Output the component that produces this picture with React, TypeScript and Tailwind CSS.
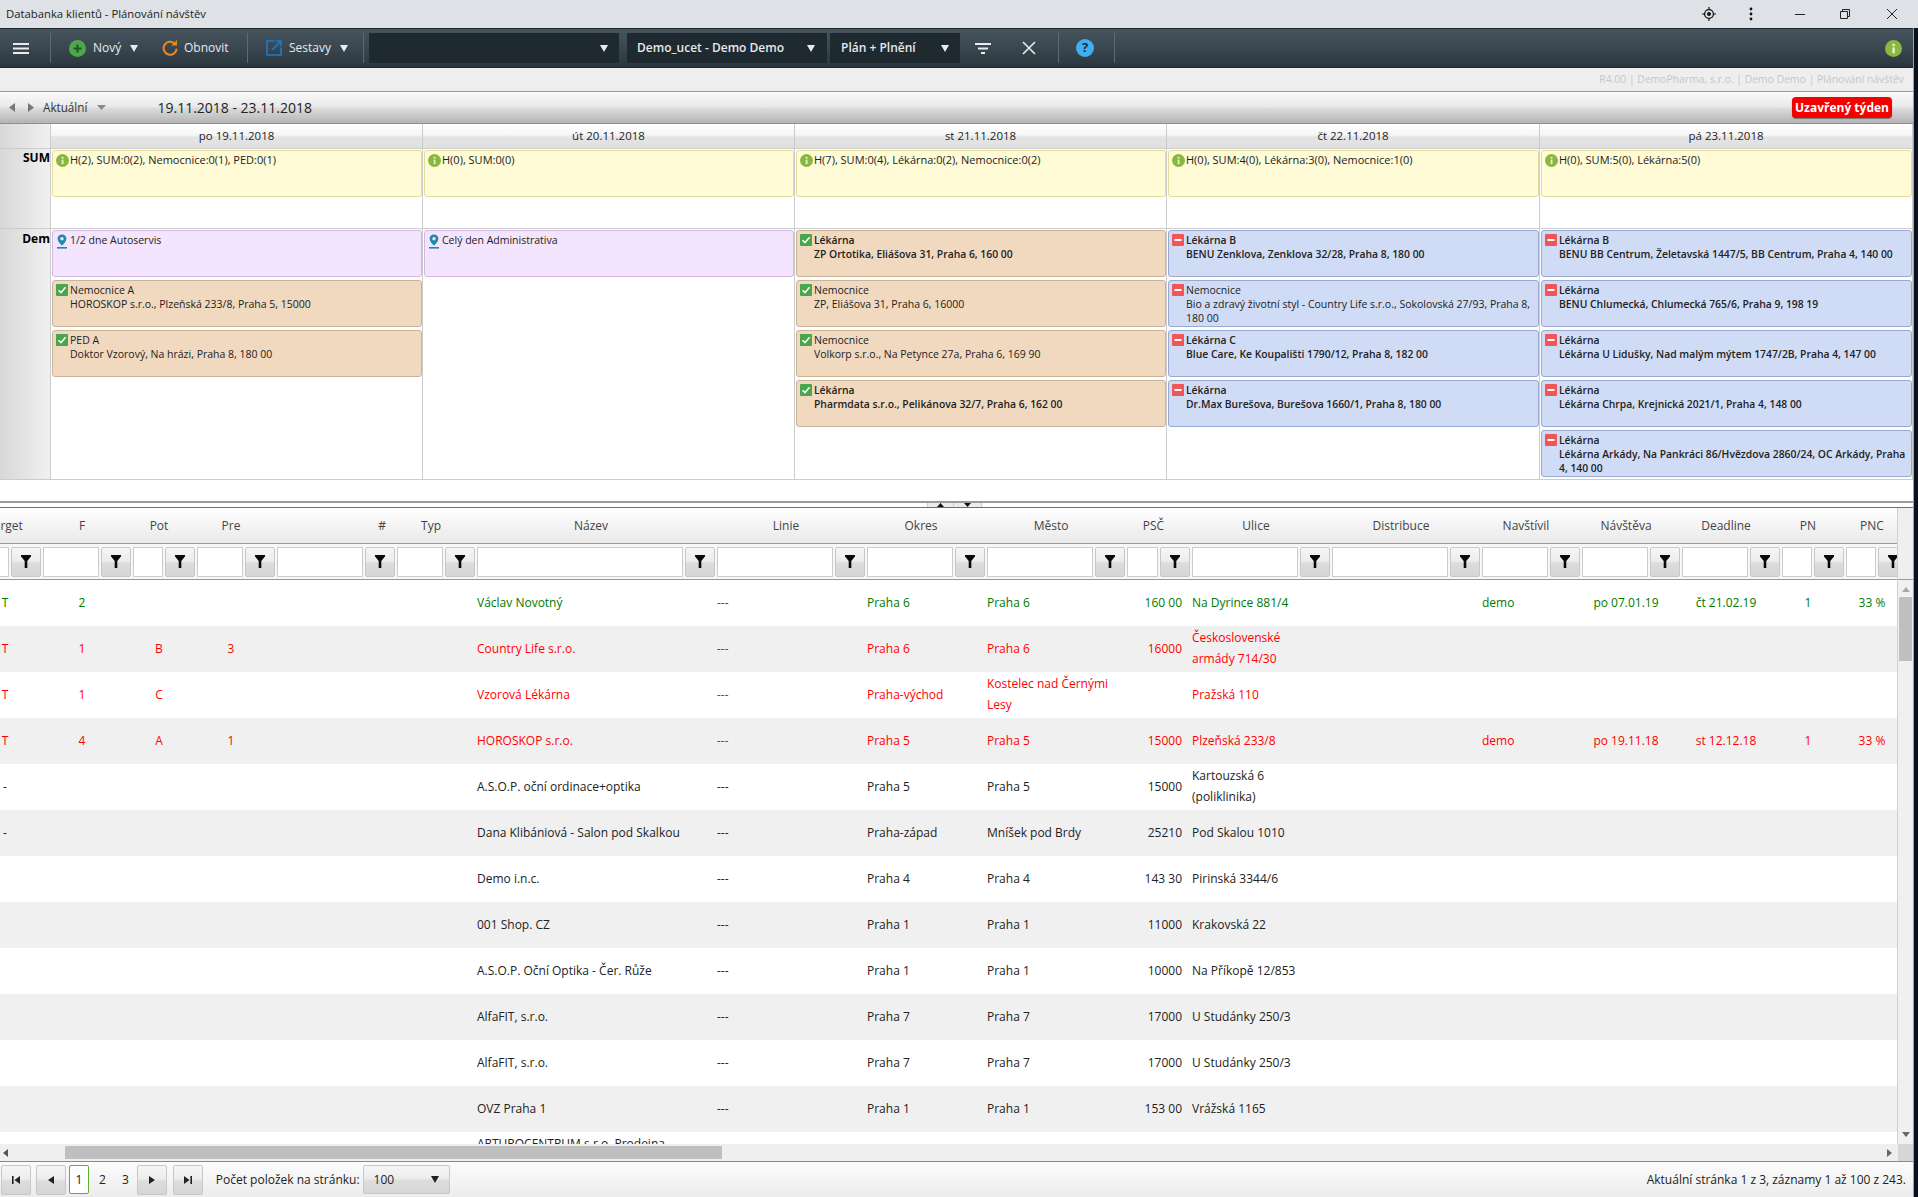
import React from "react";

const Tri = ({ c = "#e8ecef", w = 8, h = 7 }: { c?: string; w?: number; h?: number }) => (
  <svg width={w} height={h} viewBox="0 0 8 7" preserveAspectRatio="none" className="shrink-0"><path d="M0 0H8L4 7Z" fill={c} /></svg>
);
const Funnel = () => (
  <svg width="10" height="13" viewBox="0 0 10 13"><path d="M0 0H10V1.5L6.3 6V13H3.7V6L0 1.5Z" fill="#0a0a0a" /></svg>
);
const InfoDot = ({ s = 12 }: { s?: number }) => (
  <svg width={s} height={s} viewBox="0 0 16 16" className="shrink-0">
    <circle cx="8" cy="8" r="8" fill="#8ab73f" />
    <rect x="7" y="7" width="2.2" height="5.5" fill="#e8f2d0" />
    <rect x="7" y="3.6" width="2.2" height="2.2" fill="#e8f2d0" />
  </svg>
);
const Check = () => (
  <svg width="12" height="12" viewBox="0 0 12 12" className="shrink-0">
    <rect width="12" height="12" rx="1" fill="#4aa64c" />
    <path d="M2.5 6.2 5 8.6 9.6 3.2" fill="none" stroke="#fff" strokeWidth="1.5" />
  </svg>
);
const Minus = () => (
  <svg width="12" height="12" viewBox="0 0 12 12" className="shrink-0">
    <rect width="12" height="12" rx="1" fill="#f25555" />
    <rect x="2.5" y="5" width="7" height="2" fill="#fff" />
  </svg>
);
const Pin = () => (
  <svg width="12" height="15" viewBox="0 0 12 15" className="shrink-0">
    <path d="M6 0.5C3.4 0.5 1.6 2.4 1.6 4.8 1.6 7.6 4.6 10 6 11.8 7.4 10 10.4 7.6 10.4 4.8 10.4 2.4 8.6 0.5 6 0.5Z" fill="#1f8ca6" />
    <circle cx="6" cy="4.8" r="1.7" fill="#f4e4fd" />
    <rect x="1" y="13" width="10" height="1.6" fill="#1f8ca6" />
  </svg>
);

type CardT = { k: "y" | "p" | "t" | "b"; icon: "i" | "pin" | "c" | "m"; title?: string; text?: string; bold?: boolean };
const cardStyle = {
  y: "bg-[#fffbd6] border-[#e2dd9f] text-[11px]",
  p: "bg-[#f4e4fd] border-[#d2b9e2] text-[10.5px]",
  t: "bg-[#f1d9bf] border-[#c9b49a] text-[10.5px]",
  b: "bg-[#d0dcf5] border-[#9aa9cf] text-[10.5px]",
};
const Card = ({ c }: { c: CardT }) => (
  <div className={`h-[47px] mb-[3px] ml-[1px] border rounded-[3px] flex pl-[3px] pr-[2px] pt-[2px] overflow-hidden leading-[14px] text-[#222] ${cardStyle[c.k]}`}>
    <div className="w-[14px] shrink-0 flex justify-start pt-[1px]">
      {c.icon === "i" && <InfoDot s={13} />}
      {c.icon === "pin" && <Pin />}
      {c.icon === "c" && <Check />}
      {c.icon === "m" && <Minus />}
    </div>
    <div className={`min-w-0 ${c.bold ? "font-semibold text-[10.35px]" : ""}`}>
      {c.title && <div>{c.title}</div>}
      {c.text && <div>{c.text}</div>}
    </div>
  </div>
);

const calCols = "grid grid-cols-[51px_372px_372px_372px_373px_373px]";
const days = ["po 19.11.2018", "út 20.11.2018", "st 21.11.2018", "čt 22.11.2018", "pá 23.11.2018"];
const sums = [
  "H(2), SUM:0(2), Nemocnice:0(1), PED:0(1)",
  "H(0), SUM:0(0)",
  "H(7), SUM:0(4), Lékárna:0(2), Nemocnice:0(2)",
  "H(0), SUM:4(0), Lékárna:3(0), Nemocnice:1(0)",
  "H(0), SUM:5(0), Lékárna:5(0)",
];
const dem: CardT[][] = [
  [
    { k: "p", icon: "pin", title: "1/2 dne Autoservis" },
    { k: "t", icon: "c", title: "Nemocnice A", text: "HOROSKOP s.r.o., Plzeňská 233/8, Praha 5, 15000" },
    { k: "t", icon: "c", title: "PED A", text: "Doktor Vzorový, Na hrázi, Praha 8, 180 00" },
  ],
  [{ k: "p", icon: "pin", title: "Celý den Administrativa" }],
  [
    { k: "t", icon: "c", title: "Lékárna", text: "ZP Ortotika, Eliášova 31, Praha 6, 160 00", bold: true },
    { k: "t", icon: "c", title: "Nemocnice", text: "ZP, Eliášova 31, Praha 6, 16000" },
    { k: "t", icon: "c", title: "Nemocnice", text: "Volkorp s.r.o., Na Petynce 27a, Praha 6, 169 90" },
    { k: "t", icon: "c", title: "Lékárna", text: "Pharmdata s.r.o., Pelikánova 32/7, Praha 6, 162 00", bold: true },
  ],
  [
    { k: "b", icon: "m", title: "Lékárna B", text: "BENU Zenklova, Zenklova 32/28, Praha 8, 180 00", bold: true },
    { k: "b", icon: "m", title: "Nemocnice", text: "Bio a zdravý životní styl - Country Life s.r.o., Sokolovská 27/93, Praha 8, 180 00" },
    { k: "b", icon: "m", title: "Lékárna C", text: "Blue Care, Ke Koupališti 1790/12, Praha 8, 182 00", bold: true },
    { k: "b", icon: "m", title: "Lékárna", text: "Dr.Max Burešova, Burešova 1660/1, Praha 8, 180 00", bold: true },
  ],
  [
    { k: "b", icon: "m", title: "Lékárna B", text: "BENU BB Centrum, Želetavská 1447/5, BB Centrum, Praha 4, 140 00", bold: true },
    { k: "b", icon: "m", title: "Lékárna", text: "BENU Chlumecká, Chlumecká 765/6, Praha 9, 198 19", bold: true },
    { k: "b", icon: "m", title: "Lékárna", text: "Lékárna U Lidušky, Nad malým mýtem 1747/2B, Praha 4, 147 00", bold: true },
    { k: "b", icon: "m", title: "Lékárna", text: "Lékárna Chrpa, Krejnická 2021/1, Praha 4, 148 00", bold: true },
    { k: "b", icon: "m", title: "Lékárna", text: "Lékárna Arkády, Na Pankráci 86/Hvězdova 2860/24, OC Arkády, Praha 4, 140 00", bold: true },
  ],
];

const gridCols = "grid grid-cols-[64px_90px_64px_80px_120px_80px_240px_150px_120px_140px_65px_140px_150px_100px_100px_100px_64px_64px_64px]";
const headers = ["Target", "F", "Pot", "Pre", "#", "Typ", "Název", "Linie", "Okres", "Město", "PSČ", "Ulice", "Distribuce", "Navštívil", "Návštěva", "Deadline", "PN", "PNC", ""];
const C = "text-center pr-[10px]";
const L = "pl-[1px] pr-[10px]";
const R = "text-right pr-[9px]";
const align = [C, C, C, C, R, C, L, L, L, L, R, L, L, L, C, C, C, C, C];

type Row = { color: string; v: string[] };
const red = "text-[#ff0000]";
const grn = "text-[#007a00]";
const blk = "text-[#222]";
const rows: Row[] = [
  { color: grn, v: ["T", "2", "", "", "", "", "Václav Novotný", "---", "Praha 6", "Praha 6", "160 00", "Na Dyrince 881/4", "", "demo", "po 07.01.19", "čt 21.02.19", "1", "33 %", ""] },
  { color: red, v: ["T", "1", "B", "3", "", "", "Country Life s.r.o.", "---", "Praha 6", "Praha 6", "16000", "Československé armády 714/30", "", "", "", "", "", "", ""] },
  { color: red, v: ["T", "1", "C", "", "", "", "Vzorová Lékárna", "---", "Praha-východ", "Kostelec nad Černými Lesy", "", "Pražská 110", "", "", "", "", "", "", ""] },
  { color: red, v: ["T", "4", "A", "1", "", "", "HOROSKOP s.r.o.", "---", "Praha 5", "Praha 5", "15000", "Plzeňská 233/8", "", "demo", "po 19.11.18", "st 12.12.18", "1", "33 %", ""] },
  { color: blk, v: ["-", "", "", "", "", "", "A.S.O.P. oční ordinace+optika", "---", "Praha 5", "Praha 5", "15000", "Kartouzská 6 (poliklinika)", "", "", "", "", "", "", ""] },
  { color: blk, v: ["-", "", "", "", "", "", "Dana Klibániová - Salon pod Skalkou", "---", "Praha-západ", "Mníšek pod Brdy", "25210", "Pod Skalou 1010", "", "", "", "", "", "", ""] },
  { color: blk, v: ["", "", "", "", "", "", "Demo i.n.c.", "---", "Praha 4", "Praha 4", "143 30", "Pirinská 3344/6", "", "", "", "", "", "", ""] },
  { color: blk, v: ["", "", "", "", "", "", "001 Shop. CZ", "---", "Praha 1", "Praha 1", "11000", "Krakovská 22", "", "", "", "", "", "", ""] },
  { color: blk, v: ["", "", "", "", "", "", "A.S.O.P. Oční Optika - Čer. Růže", "---", "Praha 1", "Praha 1", "10000", "Na Příkopě 12/853", "", "", "", "", "", "", ""] },
  { color: blk, v: ["", "", "", "", "", "", "AlfaFIT, s.r.o.", "---", "Praha 7", "Praha 7", "17000", "U Studánky 250/3", "", "", "", "", "", "", ""] },
  { color: blk, v: ["", "", "", "", "", "", "AlfaFIT, s.r.o.", "---", "Praha 7", "Praha 7", "17000", "U Studánky 250/3", "", "", "", "", "", "", ""] },
  { color: blk, v: ["", "", "", "", "", "", "OVZ Praha 1", "---", "Praha 1", "Praha 1", "153 00", "Vrážská 1165", "", "", "", "", "", "", ""] },
  { color: blk, v: ["", "", "", "", "", "", "ARTUROCENTRUM s.r.o. Prodejna Vinohrady", "---", "Praha 1", "Praha 1", "11000", "Národní 25", "", "", "", "", "", "", ""] },
];

const Sep = () => <div className="w-px h-[30px] bg-[#5e6a72] shrink-0" />;
const selectCls = "h-[30px] bg-[#1f2930] flex items-center justify-between shrink-0 font-semibold text-[#e6eaee]";
const btnCls = "w-[30px] h-[30px] border border-[#c8c8c8] rounded-[2px] bg-[linear-gradient(to_bottom,#f6f6f6_0%,#ededed_45%,#dcdcdc_55%,#d6d6d6_100%)] flex items-center justify-center shrink-0";

const PagerBtn = ({ d }: { d: string }) => (
  <div className={btnCls}>
    <svg width="10" height="8" viewBox="0 0 10 8"><path d={d} fill="#222" /></svg>
  </div>
);

export default function App() {
  return (
    <div className="w-[1918px] h-[1197px] flex flex-col overflow-hidden bg-white text-[12px] font-['Open_Sans',sans-serif] text-[#222]">
      {/* title bar */}
      <div className="h-[28px] shrink-0 bg-[#dee1e5] flex items-center pl-[6px] text-[#222]">
        <span className="text-[11.3px]">Databanka klientů - Plánování návštěv</span>
        <div className="flex-1" />
        <svg width="14" height="14" viewBox="0 0 14 14" className="mr-[33px]">
          <circle cx="7" cy="7" r="4.4" fill="none" stroke="#111" strokeWidth="1.3" />
          <circle cx="7" cy="7" r="2" fill="#111" />
          <path d="M7 0V2.6M7 11.4V14M0 7H2.6M11.4 7H14" stroke="#111" strokeWidth="1.2" />
        </svg>
        <svg width="4" height="14" viewBox="0 0 4 14" className="mr-[42px]">
          <circle cx="2" cy="2" r="1.4" fill="#111" />
          <circle cx="2" cy="7" r="1.4" fill="#111" />
          <circle cx="2" cy="12" r="1.4" fill="#111" />
        </svg>
        <svg width="10" height="10" viewBox="0 0 10 10" className="mr-[35px]"><path d="M0 5.5H10" stroke="#222" strokeWidth="1" /></svg>
        <svg width="10" height="10" viewBox="0 0 10 10" className="mr-[37px]">
          <path d="M.5 2.5H7.5V9.5H.5Z M2.5 2.5V.5H9.5V7.5H7.5" fill="none" stroke="#222" strokeWidth="1" />
        </svg>
        <svg width="10" height="10" viewBox="0 0 10 10" className="mr-[21px]"><path d="M0 0L10 10M10 0L0 10" stroke="#222" strokeWidth="1" /></svg>
      </div>

      <div className="flex-1 min-h-0 flex bg-[#0a101c]">
        <div className="w-[1914px] h-full flex flex-col bg-white border-r border-[#a0a0a0]">
          {/* toolbar */}
          <div className="h-[40px] shrink-0 flex items-center bg-[linear-gradient(to_bottom,#46545e_0%,#3a4750_50%,#2b363e_100%)] border-t border-b border-[#1c2329] text-[#e6eaee]">
            <div className="w-[50px] pl-[13px] shrink-0">
              <svg width="16" height="11" viewBox="0 0 16 11"><path d="M0 1H16M0 5.5H16M0 10H16" stroke="#e8ecef" strokeWidth="2" /></svg>
            </div>
            <Sep />
            <div className="w-[111px] shrink-0 flex items-center pl-[18px]">
              <svg width="17" height="17" viewBox="0 0 17 17">
                <circle cx="8.5" cy="8.5" r="8.5" fill="#4ca84a" />
                <path d="M8.5 4.5V12.5M4.5 8.5H12.5" stroke="#22522a" strokeWidth="2" />
              </svg>
              <span className="ml-[7px]">Nový</span>
              <span className="ml-[9px]"><Tri /></span>
            </div>
            <div className="w-[85px] shrink-0 flex items-center">
              <svg width="16" height="16" viewBox="0 0 16 16">
                <path d="M12.6 3.6A6.5 6.5 0 1 0 14.6 8.6" fill="none" stroke="#f0861e" strokeWidth="2" />
                <path d="M9.2 5.4H15V0Z" fill="#f0861e" />
              </svg>
              <span className="ml-[6px]">Obnovit</span>
            </div>
            <Sep />
            <div className="w-[115px] shrink-0 flex items-center pl-[18px]">
              <svg width="16" height="16" viewBox="0 0 16 16">
                <path d="M8.5 1H1V15H15V7.5" fill="none" stroke="#1a7bd0" strokeWidth="1.6" />
                <path d="M6 10L15 1M10 1H15V6" fill="none" stroke="#1a7bd0" strokeWidth="1.6" />
              </svg>
              <span className="ml-[7px]">Sestavy</span>
              <span className="ml-[9px]"><Tri /></span>
            </div>
            <Sep />
            <div className={`${selectCls} w-[250px] ml-[5px] pr-[11px]`}>
              <span />
              <Tri />
            </div>
            <div className={`${selectCls} w-[200px] ml-[8px] pl-[10px] pr-[12px]`}>
              <span>Demo_ucet - Demo Demo</span>
              <Tri />
            </div>
            <div className={`${selectCls} w-[130px] ml-[3px] pl-[11px] pr-[11px]`}>
              <span>Plán + Plnění</span>
              <Tri />
            </div>
            <svg width="16" height="11" viewBox="0 0 16 11" className="ml-[15px] shrink-0"><path d="M0 1H16M3 5.5H13M6 10H10" stroke="#e8ecef" strokeWidth="1.8" /></svg>
            <svg width="14" height="14" viewBox="0 0 14 14" className="ml-[31px] shrink-0"><path d="M1 1L13 13M13 1L1 13" stroke="#e8ecef" strokeWidth="1.6" /></svg>
            <div className="ml-[22px]"><Sep /></div>
            <div className="ml-[17px] w-[18px] h-[18px] rounded-full bg-[#3fb0ef] flex items-center justify-center text-[13px] font-bold text-[#12304a] shrink-0">?</div>
            <div className="ml-[20px]"><Sep /></div>
            <div className="flex-1" />
            <div className="mr-[11px]"><InfoDot s={17} /></div>
          </div>

          {/* info strip */}
          <div className="h-[24px] shrink-0 bg-[#eeeeee] border-b border-[#9a9a9a] flex items-center justify-end pr-[9px] text-[#c6c6c6] text-[10.4px]">
            R4.00 | DemoPharma, s.r.o. | Demo Demo | Plánování návštěv
          </div>

          {/* week navigation */}
          <div className="h-[32px] shrink-0 flex items-center border-b border-[#8e8e8e] bg-[linear-gradient(to_bottom,#fbfbfb_0%,#e8e8e8_48%,#dcdcdc_52%,#b4b4b4_100%)] text-[#333]">
            <svg width="6" height="9" viewBox="0 0 6 9" className="ml-[9px]"><path d="M6 0V9L0 4.5Z" fill="#777" /></svg>
            <svg width="6" height="9" viewBox="0 0 6 9" className="ml-[13px]"><path d="M0 0V9L6 4.5Z" fill="#777" /></svg>
            <span className="ml-[9px] text-[11.7px]">Aktuální</span>
            <span className="ml-[10px]"><Tri c="#888" w={9} h={5} /></span>
            <span className="ml-[51px] text-[14px] text-[#222]">19.11.2018 - 23.11.2018</span>
            <div className="flex-1" />
            <div className="w-[100px] h-[21px] mr-[21px] rounded-[4px] bg-[#f50000] text-white font-bold flex items-center justify-center shadow-[0_1px_1px_#777]">Uzavřený týden</div>
          </div>

          {/* calendar header */}
          <div className={`${calCols} h-[25px] shrink-0 border-b border-[#cccccc] text-[#222] text-[11.5px]`}>
            <div className="border-r border-[#cccccc] bg-[linear-gradient(to_right,#d8d8d8,#f0f0f0)]" />
            {days.map((d) => (
              <div key={d} className="border-r border-[#cccccc] flex items-center justify-center bg-[linear-gradient(to_bottom,#ffffff_0%,#f6f6f6_45%,#e4e4e4_55%,#e0e0e0_100%)]">{d}</div>
            ))}
          </div>

          {/* SUM */}
          <div className={`${calCols} h-[80px] shrink-0 border-b border-[#cccccc]`}>
            <div className="border-r border-[#cccccc] bg-[linear-gradient(to_right,#d8d8d8,#f0f0f0)] text-right font-bold text-black">SUM</div>
            {sums.map((s) => (
              <div key={s} className="border-r border-[#cccccc] pt-[1px]">
                <Card c={{ k: "y", icon: "i", title: s }} />
              </div>
            ))}
          </div>

          {/* Dem */}
          <div className={`${calCols} h-[251px] shrink-0 border-b border-[#cccccc]`}>
            <div className="border-r border-[#cccccc] bg-[linear-gradient(to_right,#d8d8d8,#f0f0f0)] text-right font-bold text-black pt-[1px]">Dem</div>
            {dem.map((col, i) => (
              <div key={i} className="border-r border-[#cccccc] pt-[1px] overflow-hidden">
                {col.map((c, j) => <Card key={j} c={c} />)}
              </div>
            ))}
          </div>

          <div className="h-[21px] shrink-0 bg-white" />

          {/* splitter */}
          <div className="h-[6px] shrink-0 border-t-2 border-[#9a9a9a] bg-white flex pl-[927px]">
            <div className="w-[27px] h-full bg-[#ececec] border-x border-[#cfcfcf] flex items-center justify-center">
              <svg width="7" height="4" viewBox="0 0 7 4"><path d="M3.5 0L7 4H0Z" fill="#111" /></svg>
            </div>
            <div className="w-[28px] h-full bg-[#ececec] border-r border-[#cfcfcf] flex items-center justify-center">
              <svg width="7" height="4" viewBox="0 0 7 4"><path d="M0 0H7L3.5 4Z" fill="#111" /></svg>
            </div>
          </div>

          {/* table */}
          <div className="h-[637px] shrink-0 flex border-t border-[#5a6f9a]">
            <div className="w-[1898px] shrink-0 overflow-hidden border-r border-[#d0d0d0]">
              <div className="w-[1960px] -ml-[22px]">
                <div className={`${gridCols} h-[36px] border-b border-[#9a9a9a] items-center text-[#444] bg-[linear-gradient(to_bottom,#ffffff,#e9e9e9)]`}>
                  {headers.map((h, i) => (
                    <div key={i} className={i === 4 ? "text-right pr-[10px]" : "text-center pr-[10px]"}>{h}</div>
                  ))}
                </div>
                <div className={`${gridCols} h-[36px] border-b border-[#9a9a9a] items-center bg-[#f7f7f7]`}>
                  {headers.map((_, i) => (
                    <div key={i} className="flex pl-[1px] pr-[1px] gap-[2px]">
                      <div className="flex-1 min-w-0 h-[30px] bg-white border border-[#cccccc]" />
                      <div className={btnCls}><Funnel /></div>
                    </div>
                  ))}
                </div>
                {rows.map((r, i) => (
                  <div key={i} className={`${gridCols} h-[46px] items-center leading-[21px] pb-[2px] ${r.color} ${i % 2 ? "bg-[#f0f0f0]" : "bg-white"}`}>
                    {r.v.map((t, j) => (
                      <div key={j} className={align[j]}>{t}</div>
                    ))}
                  </div>
                ))}
              </div>
            </div>
            <div className="w-[15px] shrink-0 flex flex-col bg-[#f0f0f0]">
              <div className="h-[72px] shrink-0 bg-[#efefef] border-b border-[#9a9a9a]" />
              <div className="flex-1 flex flex-col items-center">
                <svg width="8" height="5" viewBox="0 0 8 5" className="mt-[7px]"><path d="M4 0L8 5H0Z" fill="#aaa" /></svg>
                <div className="w-[13px] h-[64px] mt-[5px] bg-[#bfbfbf]" />
                <div className="flex-1" />
                <svg width="8" height="5" viewBox="0 0 8 5" className="mb-[7px]"><path d="M0 0H8L4 5Z" fill="#666" /></svg>
              </div>
            </div>
          </div>

          {/* horizontal scrollbar */}
          <div className="h-[17px] shrink-0 flex">
            <div className="w-[1898px] bg-[#efefef] flex items-center">
              <svg width="5" height="8" viewBox="0 0 5 8" className="ml-[3px]"><path d="M5 0V8L0 4Z" fill="#555" /></svg>
              <div className="w-[657px] h-[13px] ml-[57px] bg-[#bfbfbf]" />
              <div className="flex-1" />
              <svg width="5" height="8" viewBox="0 0 5 8" className="mr-[6px]"><path d="M0 0V8L5 4Z" fill="#666" /></svg>
            </div>
            <div className="flex-1 bg-[#d6d6d6]" />
          </div>

          {/* pager */}
          <div className="flex-1 min-h-0 flex items-center border-t border-[#8a8a8a] bg-[linear-gradient(to_bottom,#fcfcfc,#ececec)] pl-[1px] text-[#222]">
            <PagerBtn d="M1 0H2.6V8H1ZM9 0V8L3.5 4Z" />
            <div className="ml-[5px]"><PagerBtn d="M8 0V8L2 4Z" /></div>
            <div className="ml-[3px] w-[20px] h-[29px] border border-[#5db030] rounded-[2px] bg-white flex items-center justify-center">1</div>
            <span className="ml-[10px]">2</span>
            <span className="ml-[16px]">3</span>
            <div className="ml-[8px]"><PagerBtn d="M2 0V8L8 4Z" /></div>
            <div className="ml-[6px]"><PagerBtn d="M1 0V8L6.5 4ZM7.4 0H9V8H7.4Z" /></div>
            <span className="ml-[13px]">Počet položek na stránku:</span>
            <div className="ml-[3px] w-[87px] h-[29px] border border-[#c8c8c8] rounded-[2px] flex items-center justify-between pl-[10px] pr-[10px] bg-[linear-gradient(to_bottom,#f6f6f6_0%,#ededed_45%,#dcdcdc_55%,#d6d6d6_100%)]">
              <span>100</span>
              <Tri c="#222" />
            </div>
            <div className="flex-1" />
            <span className="mr-[7px]">Aktuální stránka 1 z 3, záznamy 1 až 100 z 243.</span>
          </div>
        </div>
      </div>
    </div>
  );
}
